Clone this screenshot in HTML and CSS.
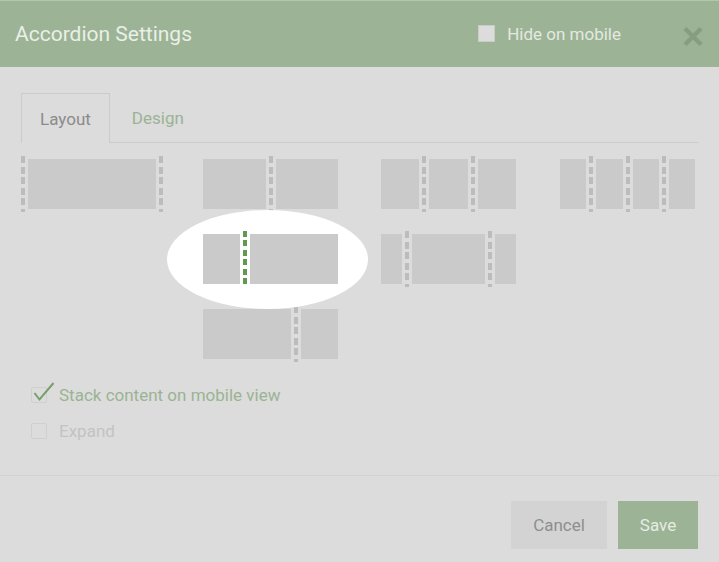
FILE: index.html
```html
<!DOCTYPE html>
<html lang="en">

<head>
    <meta charset="UTF-8">
    <meta name="viewport" content="width=device-width, initial-scale=1.0">
    <title>Accordion Settings</title>
    <link rel="stylesheet" href="styles.css">
</head>

<body>
    <div class="modal">
        <div class="modal-header">
            <h1>Accordion Settings</h1>
            <label class="hide-mobile">
                <span class="box"></span>
                Hide on mobile
            </label>
            <button class="close-button" aria-label="Close">
                <svg width="20" height="21" viewBox="0 0 20 21">
                    <path d="M2 2.5 L18 18.5 M18 2.5 L2 18.5" stroke="#859e7f" stroke-width="4.5" fill="none" />
                </svg>
            </button>
        </div>

        <div class="modal-body">
            <div class="tabs">
                <div class="tab active">Layout</div>
                <div class="tab">Design</div>
            </div>

            <div class="layouts">
                <!-- row 1 -->
                <div class="thumb full">
                    <span class="divider"></span>
                    <span class="block"></span>
                    <span class="divider"></span>
                </div>
                <div class="thumb">
                    <span class="block"></span>
                    <span class="divider"></span>
                    <span class="block"></span>
                </div>
                <div class="thumb">
                    <span class="block"></span>
                    <span class="divider"></span>
                    <span class="block"></span>
                    <span class="divider"></span>
                    <span class="block"></span>
                </div>
                <div class="thumb">
                    <span class="block"></span>
                    <span class="divider"></span>
                    <span class="block"></span>
                    <span class="divider"></span>
                    <span class="block"></span>
                    <span class="divider"></span>
                    <span class="block"></span>
                </div>

                <!-- row 2 -->
                <div class="thumb col-2 selected">
                    <span class="block"></span>
                    <span class="divider"></span>
                    <span class="block wide"></span>
                </div>
                <div class="thumb col-3">
                    <span class="block"></span>
                    <span class="divider"></span>
                    <span class="block center"></span>
                    <span class="divider"></span>
                    <span class="block"></span>
                </div>

                <!-- row 3 -->
                <div class="thumb col-2">
                    <span class="block wide"></span>
                    <span class="divider"></span>
                    <span class="block"></span>
                </div>
            </div>

            <div class="options">
                <label class="option checked">
                    <span class="box">
                        <svg width="24" height="22" viewBox="0 0 24 22">
                            <path d="M2.5 11 L7.5 17.5 L21.5 1" stroke="#76a06a" stroke-width="2" fill="none" />
                        </svg>
                    </span>
                    Stack content on mobile view
                </label>
                <label class="option">
                    <span class="box"></span>
                    Expand
                </label>
            </div>
        </div>

        <div class="modal-footer">
            <button class="cancel-button">Cancel</button>
            <button class="save-button">Save</button>
        </div>
    </div>
</body>

</html>
```

FILE: styles.css
```css
body {
    font-family: Roboto, "Liberation Sans", Arial, sans-serif;
    background: #dcdcdc;
    margin: 0;
}

.modal {
    width: 719px;
    height: 562px;
    display: flex;
    flex-direction: column;
}

.modal-header {
    height: 66px;
    background: #9cb495;
    border-top: 1px solid #b4c6ae;
    display: flex;
    align-items: center;
    padding: 0 16px 0 15px;
}

.modal-header h1 {
    margin: 0;
    font-size: 21px;
    font-weight: normal;
    color: #eaefe8;
}

.hide-mobile {
    margin-left: auto;
    display: flex;
    align-items: center;
    font-size: 17px;
    color: #e3e9e1;
    margin-top: -1px;
}

.hide-mobile .box {
    width: 15px;
    height: 15px;
    background: #dcdcdc;
    border: 1px solid #c7cfc4;
    margin-right: 12px;
}

.close-button {
    margin-left: 62px;
    background: none;
    border: none;
    padding: 0;
    width: 20px;
    height: 21px;
    margin-top: 4px;
}

.modal-body {
    flex: 1;
    padding: 26px 21px 0 21px;
}

.tabs {
    display: flex;
    height: 49px;
    border-bottom: 1px solid #cbcbcb;
}

.tab {
    padding: 15px 18px 0 18px;
    font-size: 17px;
    color: #9bb394;
    margin-left: 4px;
}

.tab.active {
    color: #8b8b8b;
    border: 1px solid #cbcbcb;
    border-bottom: none;
    margin-left: 0;
    height: 50px;
    box-sizing: border-box;
    background: #dcdcdc;
}

.layouts {
    display: grid;
    grid-template-columns: 182px 178px 179px 136px;
    row-gap: 19px;
    margin-top: 13px;
}

.thumb {
    width: 135px;
    height: 56px;
    display: flex;
    align-items: center;
    gap: 3px;
}

.thumb.full {
    width: 142px;
}

.thumb.col-2 {
    grid-column: 2;
}

.thumb.col-3 {
    grid-column: 3;
}

.block {
    flex: 1;
    height: 50px;
    background: #cacaca;
}

.block.wide {
    flex: 2.35;
}

.block.center {
    flex: 3.5;
}

.divider {
    width: 4px;
    height: 56px;
    background: repeating-linear-gradient(to bottom, #bcbcbc 0 7px, transparent 7px 10.6px);
}

.thumb.selected {
    position: relative;
    isolation: isolate;
}

.thumb.selected::before {
    content: "";
    position: absolute;
    left: -36px;
    top: -21px;
    width: 201px;
    height: 99px;
    border-radius: 50%;
    background: #ffffff;
    z-index: -1;
}

.thumb.selected .divider {
    background: repeating-linear-gradient(to bottom, #5f9a4f 0 6px, transparent 6px 9.4px);
}

.options {
    margin-top: 23px;
    padding-left: 10px;
}

.option {
    display: flex;
    align-items: center;
    height: 20px;
    font-size: 17px;
    color: #c3c3c3;
    margin-bottom: 16px;
}

.option.checked {
    color: #9bb394;
}

.option .box {
    position: relative;
    width: 14px;
    height: 14px;
    border: 1px solid #cfcfcf;
    border-radius: 2px;
    margin-right: 12px;
}

.option .box svg {
    position: absolute;
    left: 0;
    top: -6px;
}

.modal-footer {
    height: 87px;
    border-top: 1px solid #d2d2d2;
    display: flex;
    justify-content: flex-end;
    align-items: flex-start;
    padding: 25px 21px 0 0;
    box-sizing: border-box;
    gap: 11px;
}

.cancel-button,
.save-button {
    height: 48px;
    border: none;
    font-family: inherit;
    font-size: 17px;
    cursor: pointer;
}

.cancel-button {
    width: 96px;
    background: #d3d3d3;
    color: #8e8e8e;
}

.save-button {
    width: 80px;
    background: #9cb495;
    color: #e6ece4;
}
```
